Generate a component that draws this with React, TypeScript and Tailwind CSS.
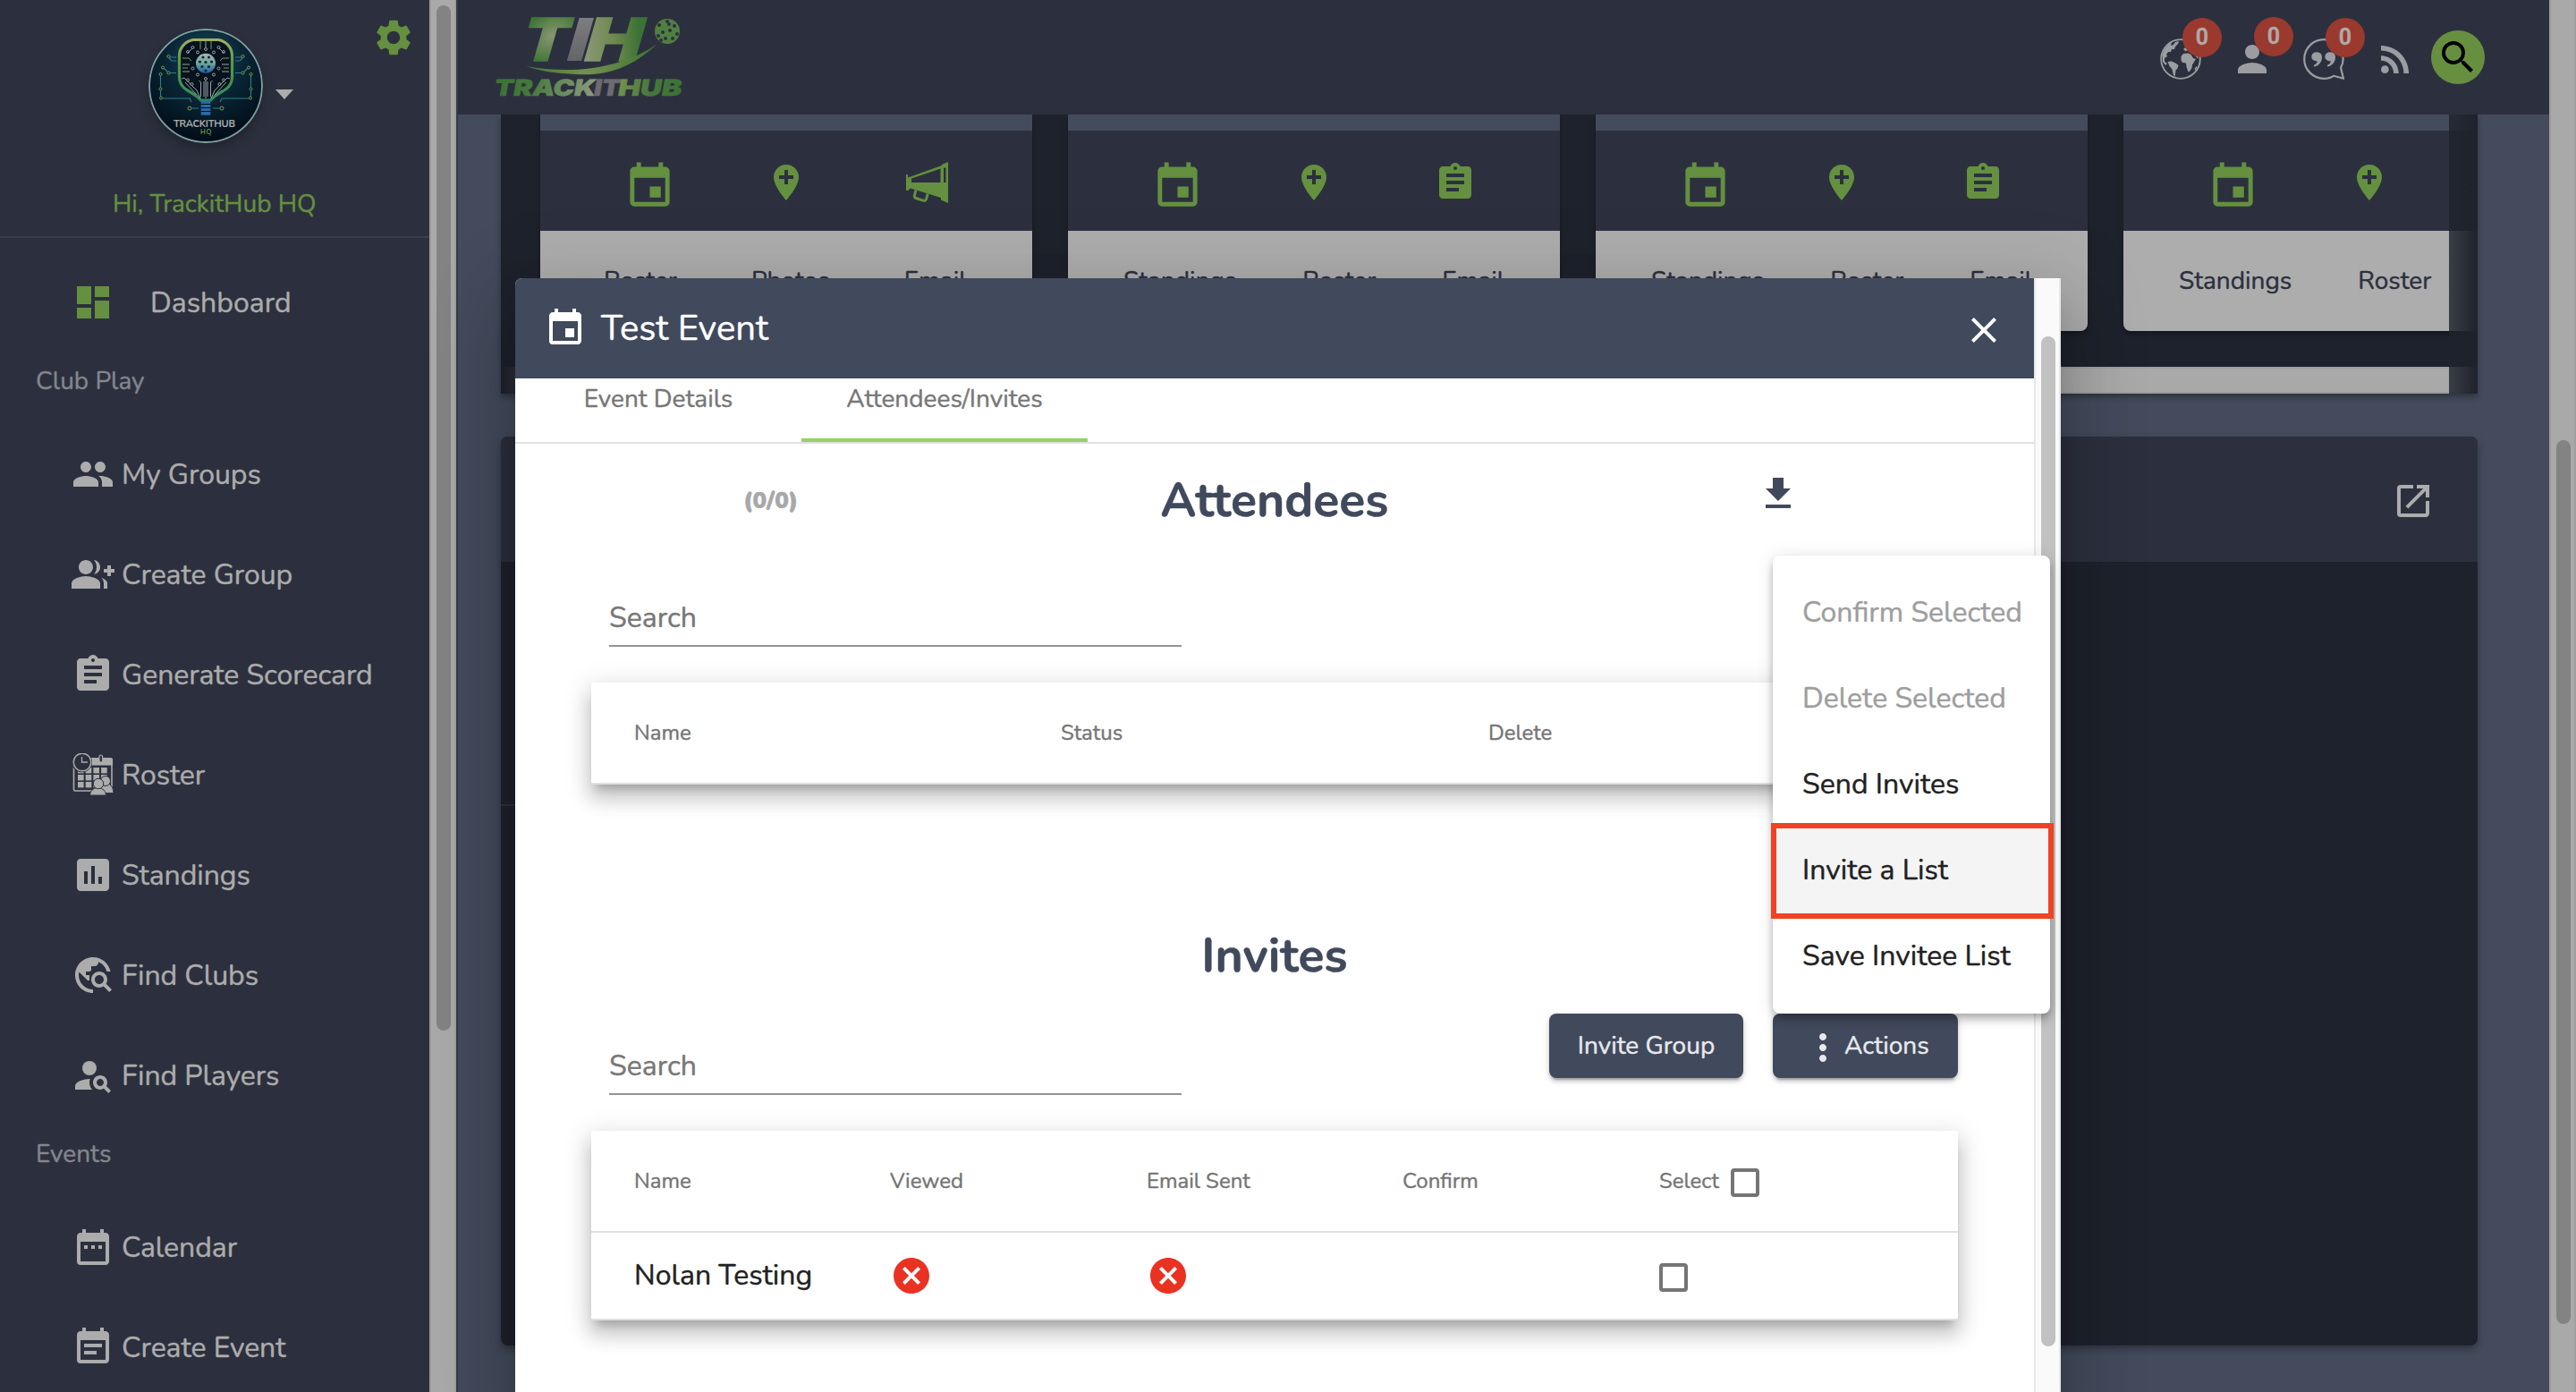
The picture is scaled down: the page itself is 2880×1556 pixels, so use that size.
import type { ReactNode } from 'react';
import {
  MdSettings,
  MdGroup,
  MdAssignment,
  MdInsertChart,
  MdTravelExplore,
  MdPersonSearch,
  MdDateRange,
  MdEventNote,
  MdEvent,
  MdAddLocation,
  MdPerson,
  MdRssFeed,
  MdSearch,
  MdOpenInNew,
  MdClose,
  MdFileDownload,
  MdCancel,
  MdMoreVert,
} from 'react-icons/md';

/* ---------- drawn icons ---------- */

function GroupAddIcon() {
  return (
    <svg viewBox="0 0 24 24" className="size-12" fill="currentColor">
      <path d="M22 9V7h-2v2h-2v2h2v2h2v-2h2V9z" />
      <path d="M8 12c2.21 0 4-1.79 4-4s-1.79-4-4-4-4 1.79-4 4 1.79 4 4 4zm0 1c-2.67 0-8 1.34-8 4v3h16v-3c0-2.66-5.33-4-8-4z" />
      <path d="M12.51 4.05C13.43 5.11 14 6.49 14 8s-.57 2.89-1.49 3.95C14.47 11.7 16 10.04 16 8s-1.53-3.7-3.49-3.95zM16.53 13.83C17.42 14.66 18 15.7 18 17v3h2v-3c0-1.45-1.59-2.51-3.47-3.17z" />
    </svg>
  );
}

function DashboardIcon() {
  return (
    <svg viewBox="0 0 24 24" className="size-12" fill="currentColor">
      <path d="M3 13h8V3H3v10zm0 8h8v-6H3v6zm10 0h8V11h-8v10zm0-18v6h8V3h-8z" />
    </svg>
  );
}

function RosterIcon() {
  const cols = [7, 15.7, 24.4, 33.1];
  return (
    <svg viewBox="0 0 48 48" className="size-12" fill="none">
      <rect x="2.5" y="6.5" width="42.5" height="35.5" rx="1.5" stroke="currentColor" strokeWidth="1.6" />
      <path d="M2 7a2 2 0 0 1 2-2h40a2 2 0 0 1 2 2v6.500H2z" fill="currentColor" />
      <rect x="31" y="2" width="3.600" height="8" rx="1.800" fill="#2c303e" stroke="currentColor" strokeWidth="1.200" />
      {[16, 24, 32].map((y) =>
        cols.map((x) => <rect key={`${x}-${y}`} x={x} y={y} width="6.600" height="6.400" fill="currentColor" />),
      )}
      <circle cx="11.500" cy="9.800" r="11.500" fill="#2c303e" />
      <circle cx="12" cy="10" r="9.800" stroke="currentColor" strokeWidth="1.500" />
      <path d="M11.500 4v6h6.500" stroke="currentColor" strokeWidth="1.300" />
      <g fill="currentColor" stroke="#2c303e" strokeWidth="1">
        <path d="M30 44.500c0-8 3-11 8-11.500 5 .5 8.500 4 9 11.500z" />
        <circle cx="38" cy="31" r="5.500" />
        <path d="M20.500 47c.5-5 3-7.500 9-9 6 1.500 8.500 4 9 9z" />
        <circle cx="30" cy="34" r="5.700" />
      </g>
    </svg>
  );
}

function MegaphoneIcon() {
  return (
    <svg viewBox="0 0 48 48" className="size-12" fill="none" stroke="currentColor" strokeWidth="3">
      <path d="M1 15v18" strokeWidth="2" />
      <path d="M2 18.500 40 5v-1l7-3v46l-8-3.500v-2.500L5 30.500 2 33z" fill="currentColor" stroke="none" />
      <path d="M6 19.500 38.500 8.500V24H6z" fill="#2c303e" stroke="none" />
      <path d="M42 7.500h2.500V24H42z" fill="#2c303e" stroke="none" />
      <path d="M11 32.500 9.500 38c-.5 1.500 0 3 1.500 3.500l8 2.700c1.500.5 3-.2 3.500-1.500l1.700-6" />
    </svg>
  );
}

function GlobeIcon() {
  return (
    <svg viewBox="0 0 46 46" className="size-[46px]" fill="none">
      <circle cx="23" cy="23" r="21.800" stroke="currentColor" strokeWidth="1.800" />
      <g fill="currentColor">
        <path d="M2.500 18 5 12l5-6 3-1-1 3 3-1 2-3 4-1-1 3-3 3-1 3-3 0-1 3-3 0-2 3 1 2-3 2 0 4 3 2-2 2-3-4z" />
        <path d="m8.500 26 4-.5 4 1.500 4 3-1 3.500-2 2-.5 4-.5 4-2-4-1-5-3-3.500z" />
        <path d="m23.500 20 2.500-3 5.500-.5 3 1.500 2.500 4 3 1-2.500 4-1.500 2.500-.5 3.500-3 4.500-1.500-1-1.500-5-.5-4-4-.5-1.500-3z" />
        <path d="m26 12 3-3 3 2 6 0 4 6 .5 6-2.500-3-3-5-4-2-5 1z" />
        <path d="m38.500 34 2-3 1 1-2 4z" />
      </g>
    </svg>
  );
}

function QuoteBubbleIcon() {
  return (
    <svg viewBox="0 0 46 46" className="size-[46px]" fill="none">
      <path
        d="M23 1.200C11 1.200 1.200 11 1.200 23S11 44.800 23 44.800c4 0 8-1 11-3l11 3-3-12c1.600-3 2.600-6.300 2.600-9.800C44.600 11 35 1.200 23 1.200z"
        stroke="currentColor"
        strokeWidth="2.200"
        strokeLinejoin="round"
      />
      <g fill="currentColor">
        <path d="M16 15.500a5 5 0 1 0-1.500 9.700c1.300 0 1.500.4.800 1.800-.7 1.300-2 2.300-3.500 2.800l.8 1.900c4.500-1.300 8.400-5 8.400-10.700 0-3.300-2-5.500-5-5.500z" />
        <path d="M31 15.500a5 5 0 1 0-1.500 9.700c1.300 0 1.500.4.800 1.800-.7 1.300-2 2.300-3.500 2.800l.8 1.900c4.500-1.300 8.400-5 8.400-10.700 0-3.300-2-5.500-5-5.500z" />
      </g>
    </svg>
  );
}

function Avatar() {
  const holes: [number, number][] = [
    [61, 32], [67.500, 32], [57.500, 37], [64, 37.500], [70.500, 37], [60, 42.500], [67.500, 42.500], [64, 47],
  ];
  const rightNodes: [number, number][] = [
    [78.500, 21], [84, 26], [73, 26.500], [78.500, 44.500], [73, 51.500], [84, 57.500], [79.500, 62],
  ];
  return (
    <svg viewBox="0 0 128 128" className="size-32 rounded-full shadow-[0_6px_12px_rgba(0,0,0,0.25)]">
      <defs>
        <radialGradient id="av-bg" cx="50%" cy="28%" r="70%">
          <stop offset="0" stopColor="#1c5068" />
          <stop offset="0.450" stopColor="#0a2637" />
          <stop offset="1" stopColor="#020d18" />
        </radialGradient>
        <linearGradient id="av-rim" x1="0" y1="0" x2="0" y2="1">
          <stop offset="0" stopColor="#a3ad62" />
          <stop offset="0.350" stopColor="#5c9a46" />
          <stop offset="1" stopColor="#2f8a5c" />
        </linearGradient>
        <linearGradient id="av-ball" x1="0" y1="0" x2="0" y2="1">
          <stop offset="0" stopColor="#b0b4b4" />
          <stop offset="0.500" stopColor="#6fa79b" />
          <stop offset="1" stopColor="#2260a8" />
        </linearGradient>
      </defs>
      <circle cx="64" cy="64" r="64" fill="url(#av-bg)" />
      <path
        d="M50 12.500h28c9 1.500 15.500 9 15.500 18V54c0 8-4 12-9 15-6 3.500-11 6-15 11H58.500c-4-5-9-7.500-15-11-5-3-9-7-9-15V30.500c0-9 6.500-16.500 15.500-18z"
        fill="#06131f"
        stroke="url(#av-rim)"
        strokeWidth="3.200"
      />
      {/* traces inside the paddle, mirrored left and right */}
      {[1, -1].map((s) => (
        <g key={s} transform={s === 1 ? undefined : 'translate(128 0) scale(-1 1)'}>
          <g fill="none" stroke="#9aa0a2" strokeWidth="1">
            <path d="M66 76V59M69.500 76V60l2-2M90 48H82M91 56l-3-1-14 14-4 9M90 40l-8 0M79 22l5 5" />
            <path d="M87 60 74 74" />
            {rightNodes.map(([x, y]) => (
              <circle key={`${x}-${y}`} cx={x} cy={y} r="1.500" />
            ))}
          </g>
          <g fill="none" stroke="#7d9d3e" strokeWidth="1">
            <path d="M70 14v9M90 33h-7l-3 3M90 44h-6" />
            <circle cx="105.500" cy="31" r="1.600" />
            <circle cx="112" cy="43.500" r="1.500" />
            <circle cx="105.500" cy="49.500" r="1.600" />
            <circle cx="114.500" cy="51" r="1.500" />
            <circle cx="114.500" cy="67.500" r="1.500" />
            <circle cx="114" cy="77.500" r="1.500" />
            <circle cx="82" cy="89" r="2" />
          </g>
          <g fill="none" stroke="#2c7f8c" strokeWidth="1.100">
            <path d="M97 32h7M97 36h5l3-3M97 49.500h7M107 48l4-4M114.500 53v13M114.500 69v7M112.500 78H82l-2 4M79.500 89H72" />
          </g>
        </g>
      ))}
      <path d="M64 14v8" stroke="#9aa0a2" />
      <circle cx="64" cy="23" r="1.500" fill="none" stroke="#9aa0a2" />
      <circle cx="64" cy="56" r="1.500" fill="none" stroke="#9aa0a2" />
      <path d="M64 58v20" stroke="#9aa0a2" />
      <circle cx="64" cy="38.700" r="11" fill="url(#av-ball)" />
      {holes.map(([x, y]) => (
        <circle key={`${x}-${y}`} cx={x} cy={y} r="1.600" fill="#0a2637" />
      ))}
      <rect x="58.700" y="80.700" width="10.600" height="16" fill="#2a6aa6" />
      <path d="M58.700 84.500h10.600M58.700 88.500h10.600M58.700 92.500h10.600" stroke="#041019" strokeWidth="1.200" />
      <text x="28" y="109.500" fontFamily="Nunito, Lato, sans-serif" fontSize="11" fontWeight="700" fill="#a9abab" textLength="69">
        TRACKITHUB
      </text>
      <text x="58" y="118" fontFamily="Nunito, Lato, sans-serif" fontSize="7.500" fontWeight="700" fill="#64903f" textLength="12.500">
        HQ
      </text>
      <circle cx="64" cy="64" r="63" fill="none" stroke="#7f9f9f" strokeWidth="2" />
    </svg>
  );
}

function Logo() {
  const dots: [number, number][] = [
    [192, 13], [201, 9], [209, 14], [196, 21], [204, 19], [212, 23], [191, 25], [199, 28], [207, 28], [203, 12], [194, 30],
  ];
  return (
    <svg viewBox="0 -15 230 115" className="h-[115px] w-[230px] overflow-visible">
      <defs>
        <radialGradient id="lg-a" gradientUnits="userSpaceOnUse" cx="64" cy="-28" r="30">
          <stop offset="0" stopColor="#8a9672" />
          <stop offset="1" stopColor="#3f7636" />
        </radialGradient>
        <linearGradient id="lg-b" gradientUnits="userSpaceOnUse" x1="108" y1="0" x2="164" y2="-20">
          <stop offset="0" stopColor="#8c9878" />
          <stop offset="0.550" stopColor="#6f8a4f" />
          <stop offset="1" stopColor="#3c7334" />
        </linearGradient>
        <linearGradient id="lg-g" x1="0" y1="0" x2="0" y2="1">
          <stop offset="0" stopColor="#86868a" />
          <stop offset="1" stopColor="#5c5c5e" />
        </linearGradient>
        <linearGradient id="lg-s" x1="0" y1="0" x2="1" y2="0">
          <stop offset="0" stopColor="#3f7636" />
          <stop offset="0.450" stopColor="#75904f" />
          <stop offset="1" stopColor="#3c7334" />
        </linearGradient>
        <linearGradient id="lg-w" gradientUnits="userSpaceOnUse" x1="10" y1="0" x2="120" y2="0">
          <stop offset="0" stopColor="#3c7334" />
          <stop offset="0.300" stopColor="#44783a" />
          <stop offset="1" stopColor="#8c9c80" />
        </linearGradient>
        <linearGradient id="lg-x" gradientUnits="userSpaceOnUse" x1="145" y1="0" x2="218" y2="0">
          <stop offset="0" stopColor="#75904f" />
          <stop offset="0.500" stopColor="#44783a" />
          <stop offset="1" stopColor="#3c7334" />
        </linearGradient>
      </defs>
      <g fontFamily="Inter, Liberation Sans, sans-serif" fontWeight="900">
        <g transform="translate(0 53) skewX(-16)" fontSize="66" strokeWidth="1.500">
          <text x="34" y="0" textLength="51" lengthAdjust="spacingAndGlyphs" fill="url(#lg-a)" stroke="url(#lg-a)">T</text>
          <text x="85" y="0" textLength="24" lengthAdjust="spacingAndGlyphs" fill="url(#lg-g)">I</text>
          <text x="105" y="0" textLength="63" lengthAdjust="spacingAndGlyphs" fill="url(#lg-b)" stroke="url(#lg-b)">H</text>
        </g>
        <g transform="translate(0 92) skewX(-10)" fontSize="25" strokeWidth="0.600">
          <text x="6.500" y="0" textLength="113" lengthAdjust="spacingAndGlyphs" fill="url(#lg-w)" stroke="url(#lg-w)">TRACK</text>
          <text x="118" y="0" textLength="29" lengthAdjust="spacingAndGlyphs" fill="#6c6b70" stroke="#6c6b70">IT</text>
          <text x="145" y="0" textLength="71" lengthAdjust="spacingAndGlyphs" fill="url(#lg-x)" stroke="url(#lg-x)">HUB</text>
        </g>
      </g>
      <path d="M43 59c50 9 105 4 147-25-32 30-62 36-92 34-20-1-38-3-55-9z" fill="url(#lg-s)" />
      <circle cx="201" cy="20" r="14" fill="#4f8042" />
      {dots.map(([x, y]) => (
        <circle key={`${x}-${y}`} cx={x} cy={y} r="2" fill="#2c303e" />
      ))}
    </svg>
  );
}

/* ---------- sidebar ---------- */

function NavItem({ icon, children }: { icon: ReactNode; children: ReactNode }) {
  return (
    <div className="flex h-28 items-center gap-2 pl-20 text-[32px] leading-none tracking-[-0.002em] text-[#acacac]">
      {icon}
      <span className="pt-px whitespace-nowrap">{children}</span>
    </div>
  );
}

function Sidebar() {
  return (
    <aside className="flex h-full w-[512px] shrink-0">
      <div className="h-full w-[480px] overflow-hidden bg-[#2c303e]">
        <div className="h-[266px] border-b-2 border-[#3b3f4b]">
          <div className="flex pl-[166px]">
            <div className="mt-8">
              <Avatar />
            </div>
            <div className="mt-[100px] ml-3.5 h-0 w-0 border-x-[10px] border-t-[11px] border-x-transparent border-t-[#acacac]" />
            <MdSettings className="mt-[18px] mr-4 ml-auto size-12 text-[#64903f]" />
          </div>
          <p className="mt-[50px] pl-[126px] text-[28px] leading-[36px] text-[#64903f]">Hi, TrackitHub HQ</p>
        </div>
        <div className="flex h-36 items-center pl-20 text-[32px] leading-none text-[#acacac]">
          <span className="text-[#64903f]">
            <DashboardIcon />
          </span>
          <span className="ml-10 pt-px">Dashboard</span>
        </div>
        <h3 className="h-16 pl-10 text-[28px] leading-[32px] text-[#83868c]">Club Play</h3>
        <NavItem icon={<MdGroup className="size-12" />}>My Groups</NavItem>
        <NavItem icon={<GroupAddIcon />}>Create Group</NavItem>
        <NavItem icon={<MdAssignment className="size-12" />}>Generate Scorecard</NavItem>
        <NavItem icon={<RosterIcon />}>Roster</NavItem>
        <NavItem icon={<MdInsertChart className="size-12" />}>Standings</NavItem>
        <NavItem icon={<MdTravelExplore className="size-12" />}>Find Clubs</NavItem>
        <NavItem icon={<MdPersonSearch className="size-12" />}>Find Players</NavItem>
        <h3 className="h-20 pl-10 text-[28px] leading-[64px] text-[#83868c]">Events</h3>
        <NavItem icon={<MdDateRange className="size-12" />}>Calendar</NavItem>
        <NavItem icon={<MdEventNote className="size-12" />}>Create Event</NavItem>
      </div>
      <div className="h-full w-[30px] border-x-2 border-l-[#9c9c9c] border-r-[#9f9f9f] bg-[#a9a9a9] pt-1.5 pl-1.5">
        <div className="h-[1146px] w-4 rounded-full bg-[#838383]" />
      </div>
      <div className="h-full w-0.5 bg-[#363c4a]" />
    </aside>
  );
}

/* ---------- page behind the dialog ---------- */

function Badged({ children }: { children: ReactNode }) {
  return (
    <div className="relative">
      {children}
      <span className="absolute -top-[23px] left-[25px] flex size-11 items-center justify-center rounded-full bg-[#9a392d] font-['Roboto',sans-serif] text-[25px] font-semibold text-[#b0aaa9]">
        0
      </span>
    </div>
  );
}

function TopBar() {
  return (
    <header className="flex h-32 shrink-0 items-start bg-[#2c303e] text-[#9b9da1]">
      <div className="ml-[33px]">
        <Logo />
      </div>
      <div className="mr-[72px] ml-auto flex items-start">
        <div className="mt-[43px]">
          <Badged>
            <GlobeIcon />
          </Badged>
        </div>
        <div className="mt-[43px] ml-[34px]">
          <Badged>
            <MdPerson className="-mt-px -ml-px size-12" />
          </Badged>
        </div>
        <div className="mt-[43px] ml-[33px]">
          <Badged>
            <QuoteBubbleIcon />
          </Badged>
        </div>
        <MdRssFeed className="mt-[42px] ml-[33px] size-12" />
        <div className="mt-[34px] ml-4 flex size-[60px] items-center justify-center rounded-full bg-[#66903f] text-black">
          <MdSearch className="size-12" />
        </div>
      </div>
    </header>
  );
}

type Card = { third: 'megaphone' | 'scorecard'; labels: string[] };

const cards: Card[] = [
  { third: 'megaphone', labels: ['Roster', 'Photos', 'Email'] },
  { third: 'scorecard', labels: ['Standings', 'Roster', 'Email'] },
  { third: 'scorecard', labels: ['Standings', 'Roster', 'Email'] },
  { third: 'scorecard', labels: ['Standings', 'Roster'] },
];

function ClubCard({ card }: { card: Card }) {
  return (
    <div className="h-[242px] w-[550px] shrink-0 overflow-hidden rounded-b-lg bg-[#adadad] shadow-[0_4px_4px_rgba(0,0,0,0.3)]">
      <div className="h-[18px] bg-[#434b5c]" />
      <div className="flex h-28 items-start bg-[#2c303e] pt-[33px] text-[#64903f]">
        <MdEvent className="ml-[93px] size-[59px]" />
        <MdAddLocation className="mt-px ml-[99px] size-12" />
        <span className="mt-px ml-[110px]">
          {card.third === 'megaphone' ? <MegaphoneIcon /> : <MdAssignment className="size-12" />}
        </span>
      </div>
      <div
        className={
          card.third === 'megaphone'
            ? 'flex h-28 items-center gap-[83px] pl-[71px] text-[28px] leading-none whitespace-nowrap text-[#2c303e]'
            : 'flex h-28 items-center gap-[74px] pl-[62px] text-[28px] leading-none whitespace-nowrap text-[#2c303e]'
        }
      >
        {card.labels.map((l) => (
          <span key={l}>{l}</span>
        ))}
      </div>
    </div>
  );
}

function Page() {
  return (
    <main className="flex h-full w-[2338px] shrink-0 flex-col bg-[#434b5c]">
      <TopBar />
      <section className="relative ml-12 h-[312px] w-[2210px] shrink-0 overflow-hidden bg-[#1e222c] shadow-[0_4px_6px_rgba(0,0,0,0.3)]">
        <div className="flex gap-10 pl-11">
          {cards.map((c, i) => (
            <ClubCard key={i} card={c} />
          ))}
        </div>
        <div className="mt-10 h-[30px] border-y-2 border-[#9f9f9f] bg-[#a9a9a9]" />
        <div className="absolute inset-y-0 right-0 w-8 bg-linear-to-r from-[#1e222c]/80 to-[#1e222c]" />
        <div className="absolute bottom-0 left-0 h-[30px] w-8 bg-linear-to-l from-[#1e222c]/80 to-[#1e222c]" />
      </section>
      <section className="mt-12 ml-12 h-[1016px] w-[2210px] shrink-0 overflow-hidden rounded-lg bg-[#1e222c] shadow-[0_4px_8px_rgba(0,0,0,0.3)]">
        <div className="flex h-[140px] items-start justify-end bg-[#2c303e] pt-12 pr-12">
          <MdOpenInNew className="size-12 text-[#acacac]" />
        </div>
        <div className="mt-[271px] h-0.5 w-8 bg-[#2c303e]" />
      </section>
    </main>
  );
}

/* ---------- dialog ---------- */

const tableShadow =
  'bg-white shadow-[0_10px_10px_-6px_rgba(0,0,0,0.2),0_16px_20px_2px_rgba(0,0,0,0.14),0_6px_28px_4px_rgba(0,0,0,0.12)]';

function SearchField({ className }: { className: string }) {
  return (
    <div className={className}>
      <span className="text-[32px] leading-[38px] text-[#777]">Search</span>
    </div>
  );
}

function CheckBox() {
  return <span className="inline-block size-8 rounded-[4px] border-4 border-[#757575]" />;
}

function Dialog() {
  return (
    <div className="absolute top-[311px] left-[576px] flex h-[1260px] w-[1728px] overflow-hidden rounded-tl-lg bg-white">
      <div className="w-[1698px]">
        <div className="flex h-28 items-center bg-[#41495c] text-white">
          <MdEvent className="-mt-px ml-8 size-12" />
          <h1 className="ml-4 text-[40px] leading-none">Test Event</h1>
          <MdClose className="mt-1 mr-8 ml-auto size-12" />
        </div>
        <nav className="flex h-[73px] border-b-2 border-[#e0e0e0] text-center text-[28px] leading-[46px] text-[#777]">
          <span className="w-80">Event Details</span>
          <span className="w-80 border-b-4 border-[#95d165]">Attendees/Invites</span>
        </nav>

        <div className="grid h-[120px] grid-cols-3 px-1">
          <span className="pt-[47px] text-center text-[26px] leading-[34px] font-black text-[#a8a8a8]">(0/0)</span>
          <h2 className="pt-[34px] text-center text-[53.5px] leading-[60px] font-bold text-[#41495c]">Attendees</h2>
          <span className="flex justify-center pt-8 text-[#41495c]">
            <MdFileDownload className="size-12" />
          </span>
        </div>
        <SearchField className="ml-[105px] flex h-[107px] w-[640px] items-end border-b-2 border-[#949494] pb-[11px]" />
        <div className={`mt-10 ml-[85px] w-[1528px] ${tableShadow}`}>
          <div className="grid h-[114px] grid-cols-[477px_478px_1fr] items-center border-b-2 border-[#e0e0e0] pl-12 text-[24px] leading-none text-[#757575]">
            <span>Name</span>
            <span>Status</span>
            <span>Delete</span>
          </div>
        </div>

        <h2 className="mt-[162px] text-center text-[53.5px] leading-[60px] font-bold text-[#41495c]">Invites</h2>
        <div className="flex h-[125px]">
          <SearchField className="ml-[105px] flex h-[125px] w-[640px] items-end border-b-2 border-[#949494] pb-[11px]" />
          <div className="mt-[34px] mr-[85px] ml-auto flex h-[72px] gap-[33px] text-[28px] text-[#e8e9ec]">
            <div className="flex w-[217px] items-center justify-center rounded-lg bg-[#41495c] shadow-[0_6px_2px_-4px_rgba(0,0,0,0.2),0_4px_4px_rgba(0,0,0,0.14),0_2px_10px_rgba(0,0,0,0.12)]">
              Invite Group
            </div>
            <div className="flex w-[207px] items-center rounded-lg bg-[#41495c] pl-8 shadow-[0_6px_2px_-4px_rgba(0,0,0,0.2),0_4px_4px_rgba(0,0,0,0.14),0_2px_10px_rgba(0,0,0,0.12)]">
              <MdMoreVert className="mt-1 size-12" />
              <span>Actions</span>
            </div>
          </div>
        </div>
        <div className={`mt-10 ml-[85px] w-[1528px] ${tableShadow}`}>
          <div className="grid h-[114px] grid-cols-[286px_287px_286px_287px_1fr] items-center border-b-2 border-[#e0e0e0] pl-12 text-[24px] leading-none text-[#757575]">
            <span>Name</span>
            <span>Viewed</span>
            <span>Email Sent</span>
            <span>Confirm</span>
            <span className="flex items-center gap-[13px]">
              Select
              <span className="mt-1 flex">
                <CheckBox />
              </span>
            </span>
          </div>
          <div className="grid h-[98px] grid-cols-[286px_287px_286px_287px_1fr] items-center border-b-2 border-[#e0e0e0] pl-12 text-[32px] leading-none text-[#212121]">
            <span>Nolan Testing</span>
            <MdCancel className="size-12 text-[#ea3223]" />
            <MdCancel className="size-12 text-[#ea3223]" />
            <span />
            <span className="mt-1 flex">
              <CheckBox />
            </span>
          </div>
        </div>
      </div>
      <div className="h-full w-[30px] border-x-2 border-[#e8e8e8] bg-[#fafafa] pt-[65px] pl-1.5">
        <div className="h-[1129px] w-4 rounded-full bg-[#c1c1c1]" />
      </div>
    </div>
  );
}

function ActionsMenu() {
  const item = 'flex h-24 items-center pl-[33px] text-[32px] leading-none whitespace-nowrap';
  return (
    <div className="absolute top-[621px] left-[1982px] h-[512px] w-[310px] rounded-lg bg-white py-4 text-[#212121] shadow-[0_4px_8px_-2px_rgba(0,0,0,0.2),0_8px_10px_rgba(0,0,0,0.14),0_2px_20px_rgba(0,0,0,0.12)]">
      <div className={`${item} text-[#9e9e9e]`}>Confirm Selected</div>
      <div className={`${item} text-[#9e9e9e]`}>Delete Selected</div>
      <div className={item}>Send Invites</div>
      <div className={`${item} relative bg-[#f4f4f4]`}>
        Invite a List
        <span className="absolute -top-[5px] -right-1 -bottom-1.5 -left-0.5 border-6 border-[#f04225]" />
      </div>
      <div className={item}>Save Invitee List</div>
    </div>
  );
}

export default function App() {
  return (
    <div className="relative flex h-[1556px] w-[2880px] overflow-hidden bg-[#434b5c] font-['Nunito','Lato',sans-serif] [-webkit-text-stroke:0.4px]">
      <Sidebar />
      <Page />
      <div className="h-full w-[30px] shrink-0 border-x-2 border-l-[#9c9c9c] border-r-[#9f9f9f] bg-[#a9a9a9] pt-[492px] pl-1.5">
        <div className="h-[988px] w-4 rounded-full bg-[#838383]" />
      </div>
      {/* dialog elevation */}
      <div className="absolute top-[311px] left-[576px] h-[1260px] w-[1728px] rounded-tl-lg shadow-[0_22px_30px_-14px_rgba(0,0,0,0.2),0_48px_76px_6px_rgba(0,0,0,0.14),0_18px_92px_16px_rgba(0,0,0,0.12)]" />
      <Dialog />
      <ActionsMenu />
    </div>
  );
}
